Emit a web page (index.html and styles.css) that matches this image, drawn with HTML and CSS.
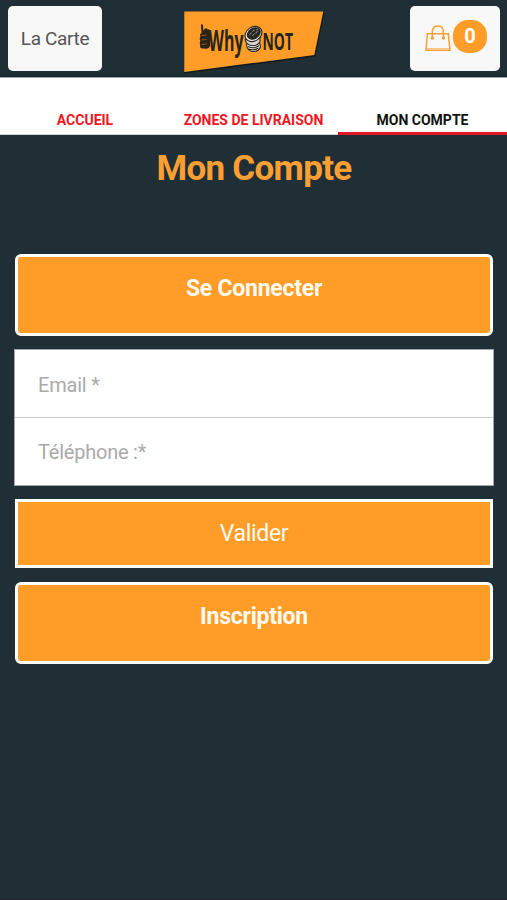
FILE: index.html
```html
<!DOCTYPE html>
<html lang="fr">
<head>
<meta charset="utf-8">
<title>Mon Compte</title>
<link rel="stylesheet" href="styles.css">
</head>
<body>
<header class="topbar">
  <a class="menu-button">La Carte</a>
  <svg class="logo" viewBox="184 11 140 63" width="140" height="63">
    <path d="M184.3 72.8 314.8 55.8 323.8 12" fill="none" stroke="#151a18" stroke-width="1.5"/>
    <path d="M184.3 11.5H323.3L314.3 55 184.3 72Z" fill="#ff9d28"/>
    <path d="M201 24.5q1.6-1 2 1l.4 5.500 1.300-2.200q2.300-1.200 2.600.7 2.400-.7 2.700 1.500v15q-1 3-4 2.800l-5-.5q-1.500-1-.8-3l-.5-2 .6-2-.7-2.500.8-2-.4-2.500 1.500-1.500Z" fill="#2b2318"/>
    <path d="M201.500 35.500l5-.5M201.500 40l5-.5M201.500 44.500l5-.5" stroke="#a56a25" stroke-width=".8"/>
    <g class="logo-text">
      <text x="208.500" y="50.500" font-size="29" textLength="35" lengthAdjust="spacingAndGlyphs">Why</text>
      <text x="262.500" y="50" font-size="22.500" textLength="30.500" lengthAdjust="spacingAndGlyphs">NOT</text>
    </g>
    <g stroke="#27251f" stroke-width="1.100">
      <path d="M246.500 45q1 6 6 6.500 6 .5 8-4.500l-1-5-11-2Z" fill="#e9e5dc"/>
      <path d="M245.500 38q-1 5 4 7 7 2.500 10.500-3.500v-5Z" fill="#d8d5cf"/>
      <path d="M248 46.500q6 3 11-1M248.500 49q5 2 10-1" fill="none"/>
      <ellipse cx="253.500" cy="34" rx="8.900" ry="7" transform="rotate(-33 253.500 34)" fill="#eeeae3"/>
      <ellipse cx="253.800" cy="33.500" rx="6.900" ry="5" transform="rotate(-33 253.800 33.500)" fill="#292923"/>
    </g>
    <path d="M249.500 34.500l2-1.500M252.500 31.500l2-1.500M252.500 35.500l2-1.500M255.500 33l2-1.500M256.500 30l1.500-.5" stroke="#c9c4b9" stroke-width=".8"/>
  </svg>
  <a class="cart-button">
    <svg class="bag" viewBox="0 0 26 27" width="26" height="27" fill="none" stroke="#fb9f32" stroke-width="1.500">
      <path d="M2.300 8.700H23.300L25 25.300H1Z"/>
      <path d="M1.400 23.500H24.400" stroke-width=".6"/>
      <path d="M7.300 13V6.700Q7.500 1 12.800 1T18.400 6.700V13"/>
      <circle cx="7.300" cy="13" r="1" fill="#fb9f32"/>
      <circle cx="18.400" cy="13" r="1" fill="#fb9f32"/>
    </svg>
    <span class="count">0</span>
  </a>
</header>
<nav class="tabs">
  <a class="tab first">ACCUEIL</a>
  <a class="tab">ZONES DE LIVRAISON</a>
  <a class="tab active">MON COMPTE</a>
</nav>
<main class="account">
  <h1>Mon Compte</h1>
  <div class="panel connect">Se Connecter</div>
  <form class="fields">
    <input type="email" placeholder="Email *">
    <input type="tel" placeholder="Téléphone :*">
  </form>
  <button class="submit" type="button">Valider</button>
  <div class="panel">Inscription</div>
</main>
</body>
</html>
```
FILE: styles.css
```css
* { box-sizing: border-box; }
body {
  margin: 0;
  min-height: 900px;
  background: #202e36;
  font-family: Roboto, "Liberation Sans", sans-serif;
  border-bottom: 1px solid #24222f;
}
.topbar {
  height: 77px;
  padding: 6px 7px 0 8px;
  display: flex;
  justify-content: space-between;
  align-items: flex-start;
  border-bottom: 1px solid #18242b;
}
.menu-button, .cart-button {
  height: 65px;
  display: flex;
  align-items: center;
  justify-content: center;
  border-radius: 5px;
  background: #f8f8f8;
}
.menu-button {
  width: 94px;
  color: #555;
  font-size: 19px;
  letter-spacing: -.35px;
}
.logo { margin: 5px 0 0 -4px; }
.logo-text {
  font-family: "Open Sans", sans-serif;
  font-weight: 700;
  fill: #27251b;
}
.cart-button {
  width: 90px;
  gap: 2px;
  padding: 0 0 4px 2px;
}
.bag { margin-top: 4px; }
.count {
  width: 34px;
  height: 33px;
  border-radius: 15px;
  background: #ff9d28;
  color: #fff;
  font-size: 20px;
  font-weight: 700;
  line-height: 33px;
  text-align: center;
}
.tabs {
  height: 58px;
  display: grid;
  grid-template-columns: repeat(3, 1fr);
  background: #fff;
  border-top: 1px solid #a5aaad;
}
.tab {
  padding-top: 34px;
  border-bottom: 1px solid #d4d7d8;
  color: #f01522;
  font-size: 14px;
  font-weight: 700;
  line-height: 17px;
  text-align: center;
  white-space: nowrap;
}
.tab.first { padding-left: 1px; }
.tab.active {
  color: #111;
  border-bottom: 3px solid #df1727;
}
.account { padding: 0 13px 0 14px; }
h1 {
  height: 119px;
  margin: 0;
  padding-top: 12px;
  color: #fb9f32;
  font-size: 35px;
  letter-spacing: -.7px;
  font-weight: 700;
  line-height: 44px;
  text-align: center;
}
.panel {
  height: 82px;
  margin: 0 1px;
  padding-top: 18px;
  border: 3px solid #fff;
  border-radius: 6px;
  background: #ff9d28;
  color: #fffaf0;
  font-size: 23px;
  letter-spacing: -.25px;
  font-weight: 700;
  line-height: 27px;
  text-align: center;
}
.fields {
  margin: 13px 0;
  height: 137px;
  display: grid;
  grid-template-rows: 67px 68px;
  background: #fff;
  border: 1px solid #a3a8aa;
}
.fields input {
  width: 100%;
  min-height: 0;
  padding: 3px 23px 0;
  border: 0;
  background: transparent;
  font: 20px Roboto, sans-serif;
  letter-spacing: -.22px;
}
.fields input + input {
  padding-top: 1px;
  border-top: 1px solid #ccc;
}
.fields input::placeholder { color: #aaa; opacity: 1; }
.submit {
  display: block;
  width: 478px;
  height: 69px;
  margin: 0 1px 14px;
  padding: 0;
  border: 3px solid #fff;
  background: #ff9d28;
  color: #fffaf0;
  font: 23px Roboto, sans-serif;
  letter-spacing: -.3px;
}
```
